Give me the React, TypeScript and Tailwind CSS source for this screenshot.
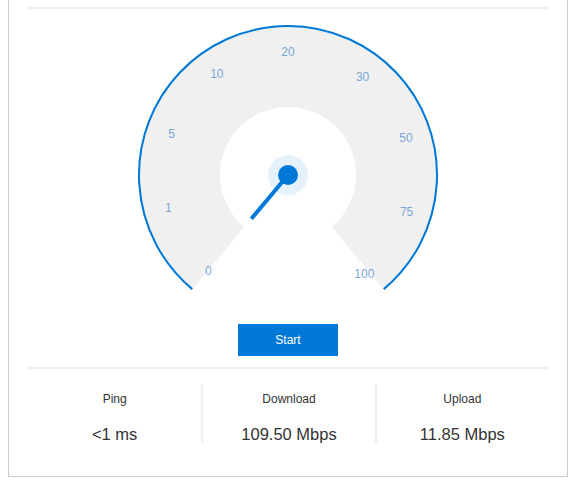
import React from 'react';

// ゲージの目盛り（-140°〜+140°、35°刻み）
const TICKS = ['0', '1', '5', '10', '20', '30', '50', '75', '100'];

const CX = 152;
const CY = 166;
const R_OUT = 149;
const R_IN = 68;
const R_LABEL = 124;

const polar = (r: number, deg: number) => {
  const a = (deg * Math.PI) / 180;
  return { x: CX + r * Math.sin(a), y: CY - r * Math.cos(a) };
};

const Gauge: React.FC<{ angle: number }> = ({ angle }) => {
  const o1 = polar(R_OUT, -140);
  const o2 = polar(R_OUT, 140);
  const i1 = polar(R_IN, -140);
  const i2 = polar(R_IN, 140);
  const sector = `M ${o1.x} ${o1.y} A ${R_OUT} ${R_OUT} 0 1 1 ${o2.x} ${o2.y} L ${i2.x} ${i2.y} A ${R_IN} ${R_IN} 0 1 0 ${i1.x} ${i1.y} Z`;
  const rim = `M ${o1.x} ${o1.y} A ${R_OUT} ${R_OUT} 0 1 1 ${o2.x} ${o2.y}`;
  const tip = polar(57, angle);

  return (
    <svg width="304" height="305" viewBox="0 0 304 305" className="block mx-auto">
      <path d={sector} fill="#f0f0f0" />
      <path d={rim} fill="none" stroke="#0078d7" strokeWidth="2" />
      {TICKS.map((t, i) => {
        const deg = -140 + i * 35;
        const p = polar(R_LABEL, deg > 0 ? deg + 2 : deg);
        return (
          <text
            key={t}
            x={p.x}
            y={p.y + 1}
            textAnchor="middle"
            dominantBaseline="central"
            fontSize="12"
            fill="#7aa7d9"
          >
            {t}
          </text>
        );
      })}
      <circle cx={CX} cy={CY} r="20" fill="#e5f1fb" />
      <line x1={CX} y1={CY} x2={tip.x} y2={tip.y} stroke="#0078d7" strokeWidth="4" />
      <circle cx={CX} cy={CY} r="10" fill="#0078d7" />
    </svg>
  );
};

const STATS = [
  { label: 'Ping', value: '<1 ms' },
  { label: 'Download', value: '109.50 Mbps' },
  { label: 'Upload', value: '11.85 Mbps' },
];

export default function App() {
  return (
    <div className="px-2 h-[484px] bg-white font-['Liberation_Sans',Arial,sans-serif] text-[#333]">
      <div className="border-x border-b border-[#cccccc] px-[19px] pt-[7px] pb-[33px]">
        <div className="h-[2px] bg-[#eeeeee]" />

        {/* ゲージ */}
        <Gauge angle={-140} />

        <div className="flex justify-center mt-[10px]">
          <button
            type="button"
            className="w-[100px] h-[32px] bg-[#0078d7] text-white text-[12px]"
          >
            Start
          </button>
        </div>

        <div className="h-[2px] bg-[#eeeeee] mt-[11px]" />

        {/* 計測結果 */}
        <div className="grid grid-cols-3 mt-[15px]">
          {STATS.map((s, i) => (
            <div
              key={s.label}
              className={`flex flex-col items-center h-[59px] pt-[7px] ${i > 0 ? 'border-l-2 border-[#eeeeee]' : ''}`}
            >
              <div className="text-[12px] leading-[16px]">{s.label}</div>
              <div className="text-[16.5px] leading-[20px] mt-[17px]">{s.value}</div>
            </div>
          ))}
        </div>
      </div>
    </div>
  );
}
